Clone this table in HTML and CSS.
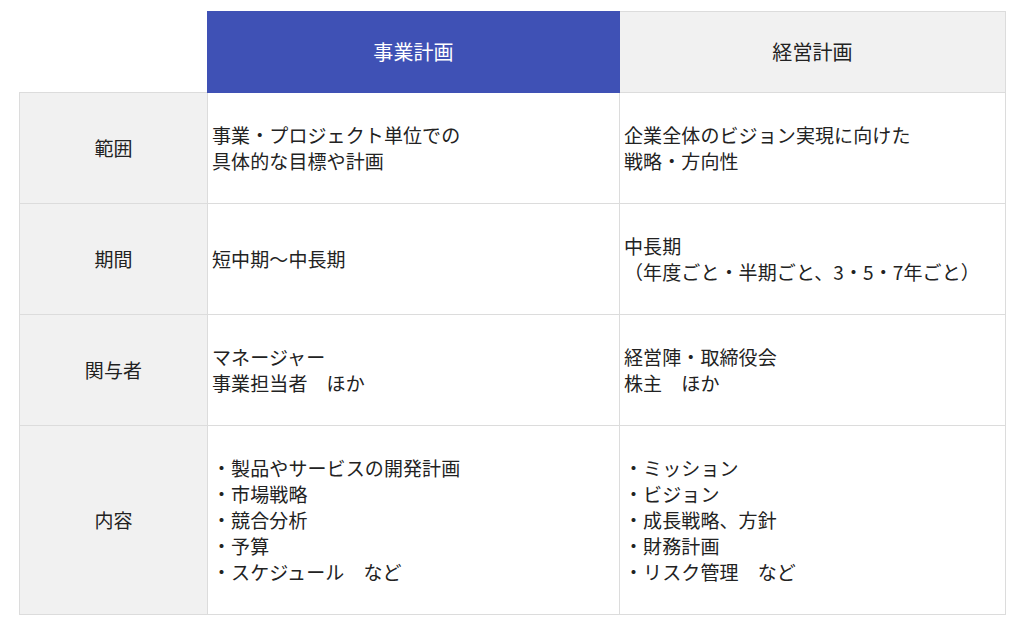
FILE: index.html
```html
<!DOCTYPE html>
<html lang="ja">
<head>
<meta charset="utf-8">
<link rel="stylesheet" href="styles.css">
</head>
<body>
<table class="cmp">
  <colgroup>
    <col class="c-label">
    <col class="c-biz">
    <col class="c-mgmt">
  </colgroup>
  <thead>
    <tr class="head">
      <th class="corner"></th>
      <th class="h-biz">事業計画</th>
      <th class="h-mgmt">経営計画</th>
    </tr>
  </thead>
  <tbody>
    <tr class="row">
      <th class="label">範囲</th>
      <td>事業・プロジェクト単位での<br>具体的な目標や計画</td>
      <td>企業全体のビジョン実現に向けた<br>戦略・方向性</td>
    </tr>
    <tr class="row">
      <th class="label">期間</th>
      <td>短中期〜中長期</td>
      <td>中長期<br>（年度ごと・半期ごと、3・5・7年ごと）</td>
    </tr>
    <tr class="row">
      <th class="label">関与者</th>
      <td>マネージャー<br>事業担当者　ほか</td>
      <td>経営陣・取締役会<br>株主　ほか</td>
    </tr>
    <tr class="row">
      <th class="label">内容</th>
      <td>・製品やサービスの開発計画<br>・市場戦略<br>・競合分析<br>・予算<br>・スケジュール　など</td>
      <td>・ミッション<br>・ビジョン<br>・成長戦略、方針<br>・財務計画<br>・リスク管理　など</td>
    </tr>
  </tbody>
</table>
</body>
</html>
```
FILE: styles.css
```css
html, body {
  margin: 0;
  background: #ffffff;
}
body {
  padding: 11px 19px 0 19px;
  font-family: "Noto Sans CJK JP", "Noto Sans", sans-serif;
  color: #222222;
}
.cmp {
  width: 986px;
  border-collapse: collapse;
  table-layout: fixed;
  font-size: 19px;
  line-height: 26px;
  letter-spacing: 0.1px;
}
.c-label { width: 188px; }
.c-biz { width: 412px; }
.c-mgmt { width: 386px; }

.cmp th, .cmp td {
  border: 1px solid #dcdcdc;
  vertical-align: middle;
  font-weight: normal;
}
.cmp td {
  padding: 29px 6px 29px 4px;
  text-align: left;
}
.head th {
  height: 80px;
  padding: 0;
  font-size: 20px;
  text-align: center;
}
.head .corner {
  border: none;
  background: #ffffff;
}
.head .h-biz {
  background: #3f51b5;
  color: #ffffff;
  border-color: #3f51b5;
}
.head .h-mgmt {
  background: #f1f1f1;
  color: #222222;
}
.label {
  background: #f1f1f1;
  text-align: center;
  padding: 0;
}
```
